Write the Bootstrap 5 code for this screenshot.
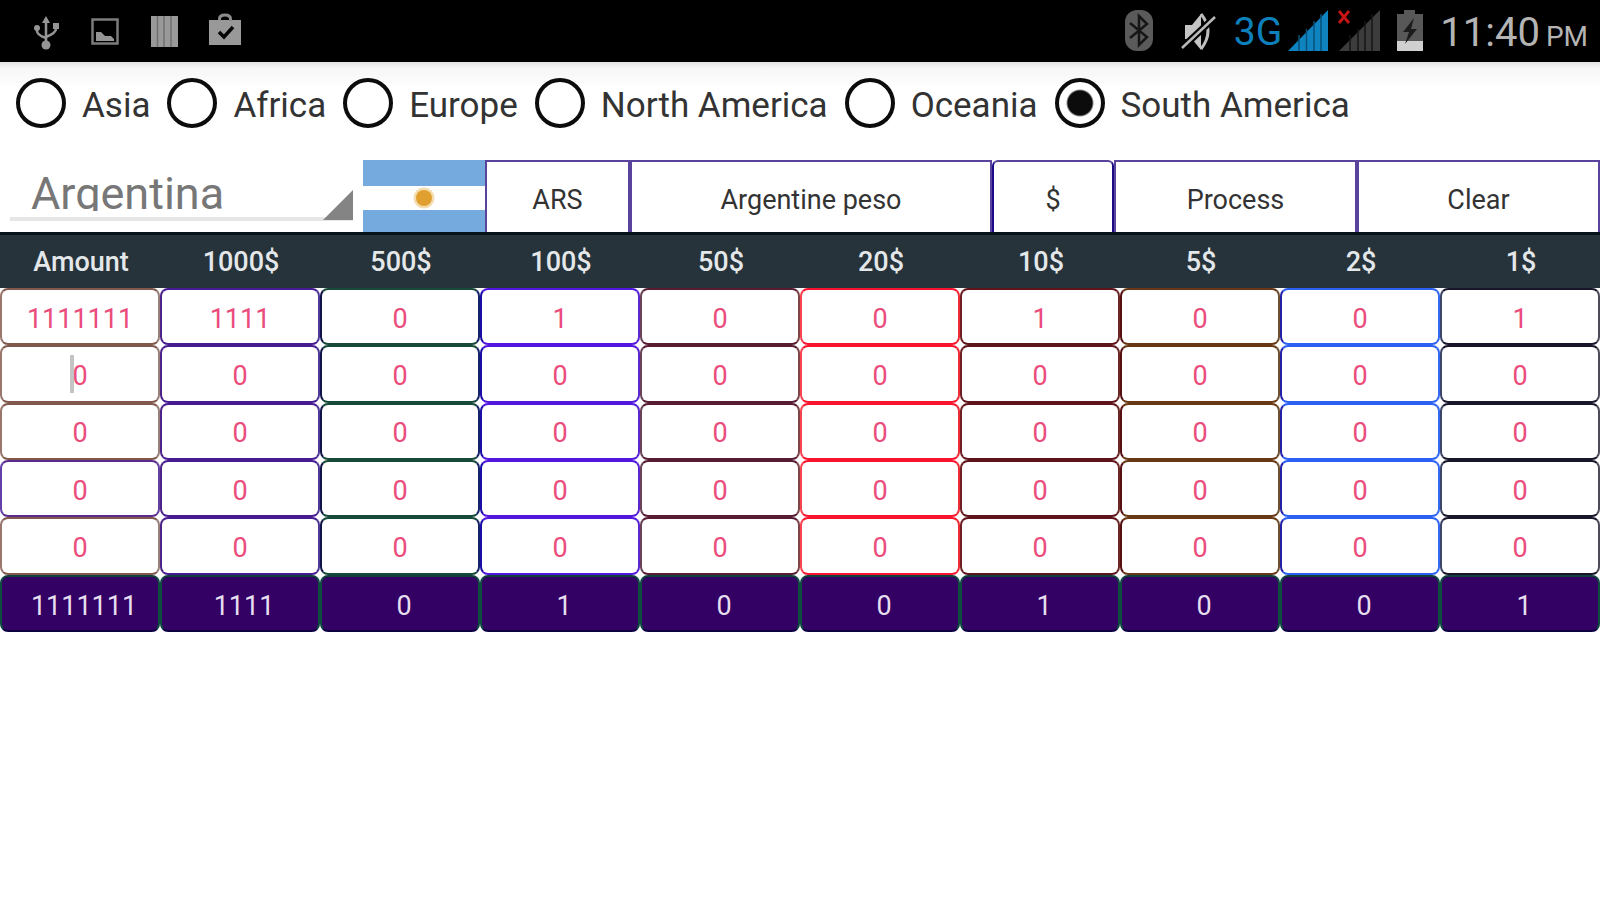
<!DOCTYPE html>
<html lang="en">
<head>
<meta charset="utf-8">
<meta name="viewport" content="width=device-width, initial-scale=1">
<title>Cash counter</title>
<link href="https://cdn.jsdelivr.net/npm/bootstrap@5.3.0/dist/css/bootstrap.min.css" rel="stylesheet">
<style>
  body { font-family: Roboto, "Noto Sans", sans-serif; background: #fff; color: #333; }

  /* Phone status bar */
  .status-bar { height: 62px; background: #000; color: #b4b4b4; padding: 0 12px 0 32px; }
  .status-bar svg { display: block; flex: none; }
  .clock { font-size: 40px; line-height: 62px; padding-top: 8px; }
  .clock small { font-size: 28px; margin-left: 6px; }
  .net-type { font-size: 39px; line-height: 62px; padding: 2px 6px 0 0; color: #0d80bb; }

  /* Continent choice */
  .continents { height: 98px; padding: 16px 16px 0; background: linear-gradient(#e2e2e2, #f6f6f6 6px, #fff 26px); }
  .continents label { font-size: 35px; line-height: 56px; padding: 0 17px 0 16px; white-space: nowrap; }
  .continents .form-check-input { width: 50px; height: 50px; margin: 0; border: 4px solid #0c0c0c; background: #fff; flex: none; }
  .continents .form-check-input:checked { background: radial-gradient(circle, #0c0c0c 12px, #fff 14px); }

  /* Currency row */
  .currency { display: grid; grid-template-columns: 363fr 122fr 145fr 362fr 122fr 243fr 243fr; height: 72px; }
  .country { margin: 0 10px; height: 61px; border-bottom: 4px solid #e6e6e6; position: relative; }
  .country-clip { height: 51px; overflow: hidden; }
  .country select { appearance: none; border: 0; background: none; width: 100%; height: 68px; padding: 0 0 0 21px; font-size: 45px; line-height: 68px; color: #777; outline: 0; }
  .country svg { position: absolute; right: 0; bottom: -3px; pointer-events: none; }
  .flag { width: 100%; height: 72px; display: block; }
  .currency-cell { border: 2px solid #5a439c; border-bottom: 0; background: #fff; color: #333; font-size: 27px; line-height: 32px; padding: 6px 0 0; display: flex; align-items: center; justify-content: center; }
  .currency-cell.symbol { border-color: #5a439c #1d0c86; border-radius: 6px 6px 0 0; }

  /* Banknote table */
  .notes { width: 100%; height: 400px; table-layout: fixed; border-collapse: separate; border-spacing: 0; font-size: 27px; }
  .notes th { height: 56px; padding: 0 0 0 2px; background: #26333a; border-top: 3px solid #07141a; color: #e4e8ea; font-weight: 500; text-align: center; line-height: 32px; }
  .notes td { padding: 0; height: 57px; text-align: center; }
  .notes input { display: block; width: 100%; height: 100%; padding: 4px 0 0; font-size: 27px; text-align: center; color: #ea4c7c; background: #fff; outline: 0;
    border: 2px solid; border-color: var(--line) var(--right) var(--line) var(--left); border-radius: 8px; }
  .notes td:nth-child(1)  { --line: #80594c; --left: #9a776c; --right: #98807a; }
  .notes td:nth-child(2)  { --line: #471c92; --left: #4c2388; --right: #4c3a96; }
  .notes td:nth-child(3)  { --line: #184a3a; --left: #101448; --right: #14246a; }
  .notes td:nth-child(4)  { --line: #5216de; --left: #1c0ca8; --right: #5a26d0; }
  .notes td:nth-child(5)  { --line: #571c32; --left: #6a4456; --right: #7e4448; }
  .notes td:nth-child(6)  { --line: #f8142c; --left: #f84450; --right: #ee2c34; }
  .notes td:nth-child(7)  { --line: #5e141a; --left: #6e2024; --right: #6c2826; }
  .notes td:nth-child(8)  { --line: #683814; --left: #561012; --right: #6e5030; }
  .notes td:nth-child(9)  { --line: #2c60f2; --left: #2420a8; --right: #3468f0; }
  .notes td:nth-child(10) { --line: #18162a; --left: #3c4668; --right: #4c4c58; }
  .notes .row-violet td:nth-child(1) { --line: #5a2a8c; --left: #6240a8; --right: #6240a0; }
  .notes input.total-field { background: #330063; color: #e6dff0; border-color: #10403c #0d4b3e #0c0040; padding: 6px 0 0 8px; }
  .with-caret { position: relative; }
  .with-caret::before { content: ""; position: absolute; left: calc(50% - 10px); top: 10px; width: 4px; height: 38px; background: #c4c4c4; }
</style>
</head>
<body>

<header class="status-bar d-flex align-items-center justify-content-between">
  <div class="d-flex align-items-center">
    <svg width="30" height="40" viewBox="0 0 30 40" fill="none" stroke="#959595" stroke-width="2.5" aria-label="USB">
      <path d="M14 8v25M5 16v4q0 4 9 7M24 14v4q0 4-10 8"/>
      <g fill="#959595" stroke="none"><path d="M10 12l4-7 4 7z"/><circle cx="14" cy="34" r="4.5"/><circle cx="5" cy="17" r="3"/><path d="M21 12h6v6h-6z"/></g>
    </svg>
    <svg class="ms-4" width="40" height="40" viewBox="0 0 40 40" aria-label="Screenshot saved">
      <path d="M6.500 8.500h25v24h-25z" fill="none" stroke="#7c7c7c" stroke-width="2.500"/><path d="M10 30v-9h5l4 4h6l3 3v2z" fill="#959595"/>
    </svg>
    <svg class="ms-4" width="30" height="40" viewBox="0 0 30 40" aria-label="Barcode">
      <path d="M1 5h27v31H1z" fill="#999"/><path d="M7.500 5v31M14 5v31M21 5v31" stroke="#707070" stroke-width="1.500"/>
    </svg>
    <svg class="ms-4" width="40" height="40" viewBox="0 0 40 40" aria-label="Update complete">
      <path d="M5 9h32v25H5z" fill="#999"/><path d="M15.500 10V8q0-4 5.500-4t5.500 4v2" fill="none" stroke="#8c8c8c" stroke-width="3"/>
      <path d="M15 21l5 5 9-10" fill="none" stroke="#050505" stroke-width="3.500"/>
    </svg>
  </div>
  <div class="d-flex align-items-center">
    <svg width="30" height="42" viewBox="0 0 30 42" aria-label="Bluetooth">
      <rect x="1" y="0" width="28" height="41" rx="12" fill="#5a5a5a"/><path d="M6 13l17 14-8 8V6l8 8L6 28" fill="none" stroke="#161616" stroke-width="2.500"/>
    </svg>
    <svg class="ms-4" width="40" height="42" viewBox="0 0 40 42" aria-label="Muted">
      <path d="M7 15h7L23 4v36L14 29H7z" fill="#c4c4c4"/><path d="M23 4q14 17 0 35" fill="none" stroke="#bdbdbd" stroke-width="3"/>
      <path d="M4 38L37 7" stroke="#000" stroke-width="7"/><path d="M4 38L37 7" stroke="#b8b8b8" stroke-width="2.500"/>
    </svg>
    <span class="net-type ms-3">3G</span>
    <svg width="40" height="42" viewBox="0 0 40 42" aria-label="Signal, SIM 1">
      <path d="M0 41L40 0v41z" fill="#0f83c0"/><path d="M11 25v16M18.500 19v22M26 11v30M33 4v37" stroke="#075078" stroke-width="1.500"/>
    </svg>
    <svg class="ms-2" width="44" height="42" viewBox="0 0 44 42" aria-label="No signal, SIM 2">
      <path d="M3 41L44 0v41z" fill="#3c3c3c"/><path d="M14 25v16M22 19v22M29 11v30M36 4v37" stroke="#141414" stroke-width="1.500"/>
      <path d="M3 1l10 12M13 1L3 13" stroke="#c41414" stroke-width="3"/>
    </svg>
    <svg class="ms-3" width="28" height="42" viewBox="0 0 28 42" aria-label="Battery charging">
      <path d="M1 4h7V0h11v4h8v27H1z" fill="#585858"/><path d="M1 31h26v10H1z" fill="#d0d0d0"/><path d="M18 8L7 22h6L9 34l12-15h-6z" fill="#1c1c1c"/>
    </svg>
    <span class="clock ms-3">11:40<small>PM</small></span>
  </div>
</header>

<main>
  <form class="continents d-flex align-items-start">
    <input class="form-check-input" type="radio" name="continent" id="asia"><label for="asia">Asia</label>
    <input class="form-check-input" type="radio" name="continent" id="africa"><label for="africa">Africa</label>
    <input class="form-check-input" type="radio" name="continent" id="europe"><label for="europe">Europe</label>
    <input class="form-check-input" type="radio" name="continent" id="north"><label for="north">North America</label>
    <input class="form-check-input" type="radio" name="continent" id="oceania"><label for="oceania">Oceania</label>
    <input class="form-check-input" type="radio" name="continent" id="south" checked><label for="south">South America</label>
  </form>

  <section class="currency">
    <div class="country">
      <div class="country-clip"><select aria-label="Country"><option>Argentina</option></select></div>
      <svg width="30" height="30" viewBox="0 0 30 30"><path d="M0 30L30 0v30z" fill="#848484"/></svg>
    </div>
    <svg class="flag" viewBox="0 0 122 72" preserveAspectRatio="none" aria-label="Flag of Argentina">
      <path fill="#74aadd" d="M0 0h122v72H0z"/><path fill="#fff" d="M0 26h122v24H0z"/>
      <circle cx="61" cy="38" r="10.500" fill="#f4dcae"/><circle cx="61" cy="38" r="8" fill="#e0a030"/>
    </svg>
    <div class="currency-cell">ARS</div>
    <div class="currency-cell">Argentine peso</div>
    <div class="currency-cell symbol">$</div>
    <button type="button" class="currency-cell">Process</button>
    <button type="button" class="currency-cell">Clear</button>
  </section>

  <table class="notes">
    <thead>
      <tr><th>Amount</th><th>1000$</th><th>500$</th><th>100$</th><th>50$</th><th>20$</th><th>10$</th><th>5$</th><th>2$</th><th>1$</th></tr>
    </thead>
    <tbody id="rows"></tbody>
  </table>
</main>

<script src="https://cdn.jsdelivr.net/npm/bootstrap@5.3.0/dist/js/bootstrap.bundle.min.js"></script>
<script>
  const names = ['Amount', '1000$', '500$', '100$', '50$', '20$', '10$', '5$', '2$', '1$'];
  const split = ['1111111', '1111', '0', '1', '0', '0', '1', '0', '0', '1'];
  const empty = names.map(() => '0');
  const rows = [split, empty, empty, empty, empty, split];
  document.getElementById('rows').innerHTML = rows.map((values, r) => {
    const total = r === rows.length - 1;
    const cells = values.map((v, c) =>
      `<td${r === 1 && c === 0 ? ' class="with-caret"' : ''}><input type="text" value="${v}" aria-label="${names[c]}, ${total ? 'total' : 'row ' + (r + 1)}"${total ? ' class="total-field" readonly' : ''}></td>`);
    return `<tr${r === 3 ? ' class="row-violet"' : ''}>${cells.join('')}</tr>`;
  }).join('');
</script>
</body>
</html>
